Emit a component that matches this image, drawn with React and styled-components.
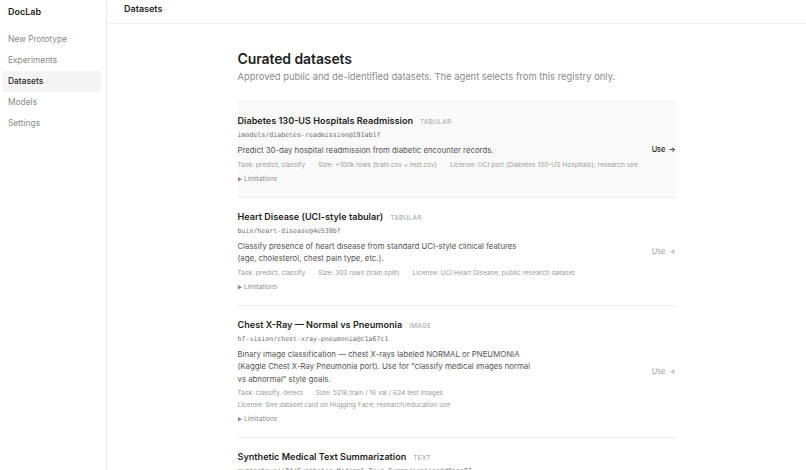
import React from 'react';
import styled, { createGlobalStyle } from 'styled-components';

const GlobalStyle = createGlobalStyle`
  html, body, #root {
    margin: 0;
    height: 100%;
  }
  body {
    font-family: Inter, "Noto Sans", sans-serif;
    color: #1f1f1f;
    background: #fff;
    overflow: hidden;
  }
`;

const datasets = [
  {
    title: 'Diabetes 130-US Hospitals Readmission',
    kind: 'Tabular',
    ref: 'imodels/diabetes-readmission@191ab1f',
    description: 'Predict 30-day hospital readmission from diabetic encounter records.',
    meta: [
      'Task: predict, classify',
      'Size: ~100k rows (train.csv + test.csv)',
      'License: UCI port (Diabetes 130-US Hospitals); research use',
    ],
    hovered: true,
  },
  {
    title: 'Heart Disease (UCI-style tabular)',
    kind: 'Tabular',
    ref: 'buio/heart-disease@4e539bf',
    description:
      'Classify presence of heart disease from standard UCI-style clinical features (age, cholesterol, chest pain type, etc.).',
    meta: [
      'Task: predict, classify',
      'Size: 303 rows (train split)',
      'License: UCI Heart Disease; public research dataset',
    ],
  },
  {
    title: 'Chest X-Ray — Normal vs Pneumonia',
    kind: 'Image',
    ref: 'hf-vision/chest-xray-pneumonia@c1a67c1',
    description:
      'Binary image classification — chest X-rays labeled NORMAL or PNEUMONIA (Kaggle Chest X-Ray Pneumonia port). Use for "classify medical images normal vs abnormal" style goals.',
    meta: [
      'Task: classify, detect',
      'Size: 5216 train / 16 val / 624 test images',
      'License: See dataset card on Hugging Face; research/education use',
    ],
  },
  {
    title: 'Synthetic Medical Text Summarization',
    kind: 'Text',
    ref: 'mustaphounii04/Synthetic-Medical-Text-Summarization@d9eee07',
    description: 'Summarize synthetic clinical notes into short patient summaries.',
    meta: ['Task: summarize', 'Size: ~10k notes', 'License: Apache-2.0'],
  },
];

const navItems = ['New Prototype', 'Experiments', 'Datasets', 'Models', 'Settings'];

const Shell = styled.div`
  display: flex;
  height: 100vh;
`;

const Sidebar = styled.aside`
  width: 107px;
  flex-shrink: 0;
  border-right: 1px solid #ececec;
  padding: 5px 5px 0 2px;
  box-sizing: border-box;
`;

const Brand = styled.div`
  font-size: 9px;
  font-weight: 600;
  line-height: 13px;
  padding: 0 6px;
  margin-bottom: 11px;
`;

const NavItem = styled.div`
  height: 21px;
  line-height: 21px;
  padding: 0 6px;
  font-size: 8.4px;
  border-radius: 3px;
  color: ${p => (p.$active ? '#1f1f1f' : '#8a8a8a')};
  font-weight: ${p => (p.$active ? 500 : 400)};
  background: ${p => (p.$active ? '#f5f5f5' : 'transparent')};
`;

const Main = styled.main`
  flex: 1;
  display: flex;
  flex-direction: column;
  min-width: 0;
`;

const TopBar = styled.header`
  height: 20px;
  border-bottom: 1px solid #f0f0f0;
  padding: 3px 17px 0;
  font-size: 9px;
  font-weight: 600;
  line-height: 12px;
  box-sizing: content-box;
  flex-shrink: 0;
`;

const Content = styled.div`
  width: 438px;
  margin: 0 auto;
  padding-top: 26px;
`;

const Title = styled.h1`
  margin: 0;
  font-size: 14px;
  font-weight: 600;
  line-height: 18px;
  letter-spacing: -0.1px;
`;

const Subtitle = styled.p`
  margin: 2px 0 0;
  font-size: 9.4px;
  line-height: 13px;
  color: #8a8a8a;
`;

const List = styled.div`
  margin-top: 18px;
  border-top: 1px solid #f2f2f2;
`;

const Card = styled.div`
  display: flex;
  align-items: center;
  gap: 8px;
  padding: 12px 0 12px;
  border-bottom: 1px solid #ececec;
  background: ${p => (p.$hovered ? '#fafafa' : 'transparent')};
`;

const Body = styled.div`
  flex: 1;
  min-width: 0;
`;

const TitleRow = styled.div`
  display: flex;
  align-items: baseline;
  gap: 7px;
  height: 15px;
  line-height: 13px;
`;

const Name = styled.span`
  font-size: 9.1px;
  font-weight: 600;
  color: #1f1f1f;
`;

const Kind = styled.span`
  font-size: 6.3px;
  letter-spacing: 0.4px;
  text-transform: uppercase;
  color: #9a9a9a;
`;

const Ref = styled.div`
  font-family: "DejaVu Sans Mono", "Liberation Mono", monospace;
  font-size: 6.6px;
  line-height: 12px;
  color: #6f6f6f;
`;

const Description = styled.p`
  margin: 3px 0 0;
  max-width: 293px;
  font-size: 7.8px;
  line-height: 12.5px;
  color: #555;
`;

const Meta = styled.div`
  display: flex;
  flex-wrap: wrap;
  column-gap: 13px;
  margin-top: 2px;
  font-size: 6.6px;
  line-height: 12px;
  color: #9a9a9a;
`;

const Limitations = styled.div`
  margin-top: 2px;
  font-size: 6.5px;
  line-height: 12px;
  color: #8a8a8a;
`;

const Tri = styled.span`
  font-size: 5px;
  margin-right: 2px;
`;

const UseLink = styled.span`
  flex-shrink: 0;
  font-size: 7.4px;
  font-weight: ${p => (p.$hovered ? 500 : 400)};
  color: ${p => (p.$hovered ? '#222' : '#9a9a9a')};
  white-space: nowrap;
`;

const Arrow = styled.span`
  margin-left: 3px;
`;

export default function App() {
  return (
    <>
      <GlobalStyle />
      <Shell>
        <Sidebar>
          <Brand>DocLab</Brand>
          {navItems.map(item => (
            <NavItem key={item} $active={item === 'Datasets'}>
              {item}
            </NavItem>
          ))}
        </Sidebar>
        <Main>
          <TopBar>Datasets</TopBar>
          <Content>
            <Title>Curated datasets</Title>
            <Subtitle>
              Approved public and de-identified datasets. The agent selects from this registry only.
            </Subtitle>
            <List>
              {datasets.map(d => (
                <Card key={d.ref} $hovered={d.hovered}>
                  <Body>
                    <TitleRow>
                      <Name>{d.title}</Name>
                      <Kind>{d.kind}</Kind>
                    </TitleRow>
                    <Ref>{d.ref}</Ref>
                    <Description>{d.description}</Description>
                    <Meta>
                      {d.meta.map(m => (
                        <span key={m}>{m}</span>
                      ))}
                    </Meta>
                    <Limitations>
                      <Tri>▶</Tri>Limitations
                    </Limitations>
                  </Body>
                  <UseLink $hovered={d.hovered}>
                    Use<Arrow>→</Arrow>
                  </UseLink>
                </Card>
              ))}
            </List>
          </Content>
        </Main>
      </Shell>
    </>
  );
}
